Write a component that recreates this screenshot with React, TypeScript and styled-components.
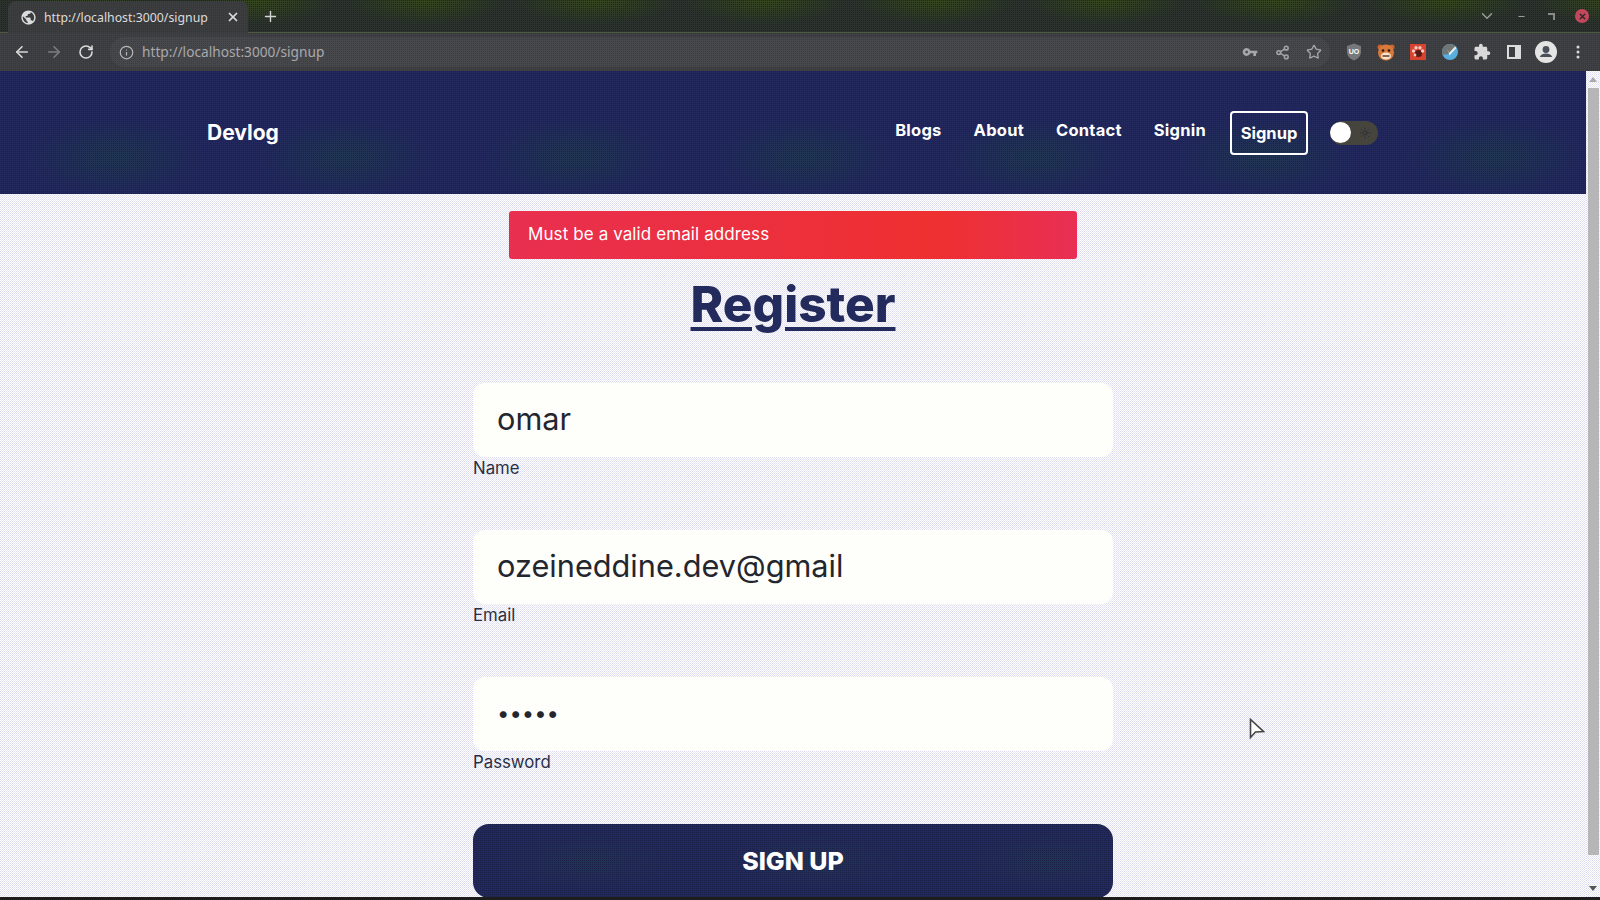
import React from "react";
import styled, { createGlobalStyle } from "styled-components";
import { ArrowLeft, ArrowRight, RotateCw, Info, Share2, Star, Plus, X, ChevronDown, Minus, Sun } from "lucide-react";
import { MdPublic, MdVpnKey, MdExtension } from "react-icons/md";

const FONT = `Inter, "Noto Sans", "Liberation Sans", sans-serif`;

// one pixel of a dither pattern, every 2x2 tile
const dot = (color: string) => `conic-gradient(${color} 25%, transparent 0)`;

const GlobalStyle = createGlobalStyle`
  html, body {
    margin: 0;
    padding: 0;
    height: 100%;
    overflow: hidden;
    background: #1d1d1d;
  }
  #root {
    height: 100%;
  }
`;

const Screen = styled.div`
  position: relative;
  display: flex;
  flex-direction: column;
  width: 1600px;
  height: 900px;
  overflow: hidden;
  font-family: ${FONT};
`;

/* ---------- browser chrome ---------- */

const TabStrip = styled.div`
  display: flex;
  align-items: flex-end;
  height: 33px;
  flex: none;
  padding-left: 8px;
  box-sizing: border-box;
  border-bottom: 1px solid #4d5a42;
  background-color: #2b322d;
  background-image: ${dot("#1f2226")},
    radial-gradient(ellipse 80px 24px at 50% 0, rgba(60, 85, 20, 0.6), transparent);
  background-size: 2px 2px, 170px 33px;
`;

const Tab = styled.div`
  display: flex;
  align-items: center;
  width: 240px;
  height: 32px;
  box-sizing: border-box;
  padding: 0 8px 0 12px;
  margin-bottom: -1px;
  border-radius: 8px 8px 0 0;
  color: #dcdcdc;
  font-size: 12.3px;
  background-color: #3c3d3f;
  background-image: ${dot("#35382f")};
  background-size: 2px 2px;
`;

const TabTitle = styled.span`
  flex: 1;
  margin-left: 7px;
  white-space: nowrap;
  font-family: "Noto Sans", sans-serif;
`;

const NewTab = styled.div`
  display: flex;
  align-items: center;
  justify-content: center;
  width: 28px;
  height: 32px;
  margin-left: 8px;
  color: #d4d4d4;
`;

const WindowControls = styled.div`
  display: flex;
  align-items: center;
  height: 32px;
  margin-left: auto;
  color: #9b9b9b;
`;

const WindowButton = styled.div<{ $width: number }>`
  display: flex;
  align-items: center;
  justify-content: center;
  width: ${(p) => p.$width}px;
`;

const RestoreGlyph = styled.div`
  width: 7px;
  height: 7px;
  border-top: 2px solid #8a8a8a;
  border-right: 2px solid #8a8a8a;
  box-sizing: border-box;
`;

const CloseButton = styled.div`
  display: flex;
  align-items: center;
  justify-content: center;
  width: 14px;
  height: 14px;
  border-radius: 50%;
  background: #c4475c;
  color: #2a2a2a;
`;

const Toolbar = styled.div`
  display: flex;
  align-items: center;
  height: 38px;
  flex: none;
  padding: 0 6px;
  box-sizing: border-box;
  background-color: #3f4043;
  background-image: ${dot("#38392a")};
  background-size: 2px 2px;
`;

const IconSlot = styled.div<{ $color?: string }>`
  display: flex;
  align-items: center;
  justify-content: center;
  width: 32px;
  height: 30px;
  flex: none;
  color: ${(p) => p.$color ?? "#d9d9d9"};
`;

const Omnibox = styled.div`
  display: flex;
  align-items: center;
  flex: 1;
  height: 30px;
  margin: 0 8px;
  border-radius: 15px;
  background: #47484c;
  background-image: ${dot("#3c3d42")};
  background-size: 2px 2px;
`;

const UrlText = styled.span`
  flex: 1;
  padding-bottom: 2px;
  font-family: "Noto Sans", sans-serif;
  font-size: 13.7px;
  color: #a9a9ab;
`;

/* ---------- page ---------- */

const Viewport = styled.div`
  display: flex;
  flex: 1;
  min-height: 0;
`;

const Page = styled.div`
  display: flex;
  flex-direction: column;
  flex: 1;
  min-width: 0;
  overflow: hidden;
`;

const Header = styled.header`
  display: flex;
  align-items: center;
  justify-content: space-between;
  flex: none;
  height: 123px;
  padding: 0 208px 0 207px;
  box-sizing: border-box;
  background-color: #22285c;
  background-image: ${dot("#1b2148")}, radial-gradient(ellipse 90px 40px at 50% 70%, rgba(30, 70, 70, 0.45), transparent);
  background-size: 2px 2px, 230px 123px;
`;

const Logo = styled.div`
  color: #fff;
  font-size: 21px;
  font-weight: 700;
`;

const Nav = styled.nav`
  display: flex;
  align-items: center;
`;

const NavLinks = styled.div`
  display: flex;
  gap: 32px;
  margin-right: 24px;
  margin-bottom: 5px;
`;

const NavLink = styled.a`
  color: #fff;
  font-size: 16.5px;
  font-weight: 700;
  letter-spacing: 0.25px;
`;

const SignupLink = styled.a`
  display: flex;
  align-items: center;
  justify-content: center;
  width: 78px;
  height: 44px;
  box-sizing: border-box;
  border: 2px solid #fff;
  border-radius: 4px;
  color: #fff;
  font-size: 16.5px;
  font-weight: 700;
`;

const ThemeToggle = styled.div`
  display: flex;
  align-items: center;
  justify-content: space-between;
  width: 48px;
  height: 24px;
  margin-left: 22px;
  padding-right: 7px;
  box-sizing: border-box;
  border-radius: 12px;
  background: #45453d;
  color: #2a2d3a;
`;

const ToggleKnob = styled.div`
  width: 21px;
  height: 21px;
  border-radius: 50%;
  background: #fff;
`;

const Main = styled.main`
  display: flex;
  flex-direction: column;
  align-items: center;
  flex: 1;
  padding-top: 17px;
  box-sizing: border-box;
  color: #232a5c;
  background-color: #ffffff;
  background-image: ${dot("#efedb8")}, ${dot("#dcdcee")},
    radial-gradient(ellipse 130px 70px at 50% 50%, rgba(240, 238, 200, 0.06), transparent);
  background-size: 2px 2px, 2px 2px, 240px 190px;
  background-position: 0 0, 1px 1px, 10px 10px;
`;

const Alert = styled.div`
  display: flex;
  align-items: center;
  width: 568px;
  height: 48px;
  flex: none;
  padding-left: 19px;
  padding-bottom: 2px;
  box-sizing: border-box;
  border-radius: 3px;
  background: linear-gradient(90deg, #e92f50 0%, #ee3030 75%, #e92f55 100%);
  color: #fff;
  font-size: 17px;
  letter-spacing: 0.1px;
`;

const Title = styled.h1`
  margin: 14px 0 47px;
  height: 63px;
  line-height: 63px;
  color: #232a5c;
  font-size: 49.5px;
  font-weight: 800;
  text-decoration: underline;
  text-decoration-thickness: 4px;
  text-underline-offset: 5px;
`;

const Form = styled.form`
  display: flex;
  flex-direction: column;
  width: 640px;
`;

const Field = styled.div`
  display: flex;
  flex-direction: column;
  height: 147px;
  flex: none;
`;

const TextInput = styled.input`
  width: 100%;
  height: 74px;
  padding: 0 24px 4px;
  box-sizing: border-box;
  border: none;
  outline: none;
  border-radius: 12px;
  background: #fefefb;
  color: #24262e;
  font-family: ${FONT};
  font-size: 30.7px;

  &[type="password"] {
    font-size: 22px;
    padding-bottom: 2px;
  }
`;

const FieldLabel = styled.label`
  margin-top: 1px;
  color: #2b2f45;
  font-size: 16.8px;
`;

const SubmitButton = styled.button`
  width: 640px;
  height: 74px;
  flex: none;
  border: none;
  border-radius: 16px;
  background-color: #22285c;
  background-image: ${dot("#1b2148")}, radial-gradient(ellipse 90px 30px at 50% 50%, rgba(30, 70, 70, 0.4), transparent);
  background-size: 2px 2px, 230px 74px;
  color: #fff;
  font-family: ${FONT};
  font-size: 25px;
  font-weight: 800;
`;

const Scrollbar = styled.div`
  display: flex;
  flex-direction: column;
  align-items: center;
  justify-content: space-between;
  width: 14px;
  flex: none;
  background-color: #ffffff;
  background-image: ${dot("#efedb8")}, ${dot("#dcdcee")};
  background-size: 2px 2px;
  background-position: 0 0, 1px 1px;
`;

const ScrollArrow = styled.div<{ $down?: boolean }>`
  width: 0;
  height: 0;
  margin: 6px 0;
  border-left: 4px solid transparent;
  border-right: 4px solid transparent;
  ${(p) => (p.$down ? "border-top: 5px solid #555;" : "border-bottom: 5px solid #aaa;")}
`;

const ScrollThumb = styled.div`
  width: 11px;
  flex: 1;
  margin-bottom: 25px;
  background: #b6b6b8;
`;

const BottomEdge = styled.div`
  height: 3px;
  flex: none;
  background: #1d1d1d;
`;

const CursorMark = styled.svg`
  position: absolute;
  left: 1249px;
  top: 718px;
`;

const ShieldIcon = () => (
  <svg width="16" height="18" viewBox="0 0 16 18">
    <path d="M8 0.5 15 3v6c0 4-3 7-7 8.5C4 16 1 13 1 9V3z" fill="#77787a" />
    <text x="8" y="11" textAnchor="middle" fontSize="7" fontWeight="700" fill="#fff" fontFamily="Liberation Sans">UO</text>
  </svg>
);

const TigerIcon = () => (
  <svg width="18" height="18" viewBox="0 0 18 18">
    <circle cx="3" cy="4" r="2.5" fill="#c9652f" />
    <circle cx="15" cy="4" r="2.5" fill="#c9652f" />
    <circle cx="9" cy="9.5" r="8" fill="#d9793a" />
    <ellipse cx="9" cy="13" rx="5" ry="3.6" fill="#f5e6cf" />
    <circle cx="6" cy="7.5" r="1.3" fill="#2a1a10" />
    <circle cx="12" cy="7.5" r="1.3" fill="#2a1a10" />
    <path d="M5.5 13h7" stroke="#5a2a14" strokeWidth="1.4" />
  </svg>
);

const PawIcon = () => (
  <svg width="16" height="16" viewBox="0 0 16 16">
    <rect width="16" height="16" fill="#d8432f" />
    <circle cx="8.5" cy="9.5" r="3.6" fill="#5a1a14" />
    <circle cx="3.5" cy="7" r="1.7" fill="#f4c9c0" />
    <circle cx="6" cy="3.8" r="1.7" fill="#f4c9c0" />
    <circle cx="10" cy="3.8" r="1.7" fill="#f4c9c0" />
    <circle cx="12.6" cy="7" r="1.7" fill="#f4c9c0" />
    <circle cx="5" cy="11" r="1.4" fill="#f4c9c0" />
  </svg>
);

const StylusIcon = () => (
  <svg width="16" height="16" viewBox="0 0 16 16">
    <circle cx="8" cy="8" r="8" fill="#58aede" />
    <path d="M8 0a8 8 0 0 0-8 8c0 1 .2 2 .5 2.8L7 10l7-7A8 8 0 0 0 8 0z" fill="#6f7674" />
    <path d="M5 4 7 9 13 2.5 14.5 4 7.5 11.5z" fill="#e8eef0" />
  </svg>
);

const SidePanelIcon = () => (
  <svg width="14" height="14" viewBox="0 0 14 14">
    <path d="M0 0h14v14H0z M2 2v10h6V2z" fill="#dcdcdc" fillRule="evenodd" />
  </svg>
);

const AvatarIcon = () => (
  <svg width="22" height="22" viewBox="0 0 22 22">
    <circle cx="11" cy="11" r="11" fill="#e4e4e4" />
    <circle cx="11" cy="8.5" r="3.4" fill="#4a5058" />
    <path d="M4.8 16c1-2.6 3.6-3.4 6.2-3.4s5.2.8 6.2 3.4z" fill="#4a5058" />
  </svg>
);

const MenuDots = () => (
  <svg width="4" height="14" viewBox="0 0 4 14">
    <circle cx="2" cy="2" r="1.5" fill="#d9d9d9" />
    <circle cx="2" cy="7" r="1.5" fill="#d9d9d9" />
    <circle cx="2" cy="12" r="1.5" fill="#d9d9d9" />
  </svg>
);

const fields = [
  { label: "Name", type: "text", value: "omar" },
  { label: "Email", type: "text", value: "ozeineddine.dev@gmail" },
  { label: "Password", type: "password", value: "omar1" },
];

const App: React.FC = () => {
  return (
    <Screen>
      <GlobalStyle />
      <TabStrip>
        <Tab>
          <MdPublic size={17} color="#dcdcdc" />
          <TabTitle>http://localhost:3000/signup</TabTitle>
          <X size={14} strokeWidth={3} />
        </Tab>
        <NewTab>
          <Plus size={17} strokeWidth={2} />
        </NewTab>
        <WindowControls>
          <WindowButton $width={34}>
            <ChevronDown size={18} strokeWidth={2} />
          </WindowButton>
          <WindowButton $width={34}>
            <Minus size={9} strokeWidth={3} />
          </WindowButton>
          <WindowButton $width={26}>
            <RestoreGlyph />
          </WindowButton>
          <WindowButton $width={36}>
            <CloseButton>
              <X size={9} strokeWidth={4} />
            </CloseButton>
          </WindowButton>
        </WindowControls>
      </TabStrip>
      <Toolbar>
        <IconSlot><ArrowLeft size={18} strokeWidth={2.2} /></IconSlot>
        <IconSlot $color="#7d7d7d"><ArrowRight size={18} strokeWidth={2.2} /></IconSlot>
        <IconSlot><RotateCw size={16} strokeWidth={2.4} /></IconSlot>
        <Omnibox>
          <IconSlot $color="#b8b8b8"><Info size={15} strokeWidth={2} /></IconSlot>
          <UrlText>http://localhost:3000/signup</UrlText>
          <IconSlot $color="#a4a6aa"><MdVpnKey size={16} /></IconSlot>
          <IconSlot $color="#a4a6aa"><Share2 size={15} strokeWidth={2.4} /></IconSlot>
          <IconSlot $color="#a4a6aa"><Star size={16} /></IconSlot>
        </Omnibox>
        <IconSlot><ShieldIcon /></IconSlot>
        <IconSlot><TigerIcon /></IconSlot>
        <IconSlot><PawIcon /></IconSlot>
        <IconSlot><StylusIcon /></IconSlot>
        <IconSlot><MdExtension size={18} /></IconSlot>
        <IconSlot><SidePanelIcon /></IconSlot>
        <IconSlot><AvatarIcon /></IconSlot>
        <IconSlot><MenuDots /></IconSlot>
      </Toolbar>
      <Viewport>
        <Page>
          <Header>
            <Logo>Devlog</Logo>
            <Nav>
              <NavLinks>
                <NavLink>Blogs</NavLink>
                <NavLink>About</NavLink>
                <NavLink>Contact</NavLink>
                <NavLink>Signin</NavLink>
              </NavLinks>
              <SignupLink>Signup</SignupLink>
              <ThemeToggle>
                <ToggleKnob />
                <Sun size={12} />
              </ThemeToggle>
            </Nav>
          </Header>
          <Main>
            <Alert>Must be a valid email address</Alert>
            <Title>Register</Title>
            <Form>
              {fields.map((field) => (
                <Field key={field.label}>
                  <TextInput type={field.type} defaultValue={field.value} />
                  <FieldLabel>{field.label}</FieldLabel>
                </Field>
              ))}
              <SubmitButton type="button">SIGN UP</SubmitButton>
            </Form>
          </Main>
        </Page>
        <Scrollbar>
          <ScrollArrow />
          <ScrollThumb />
          <ScrollArrow $down />
        </Scrollbar>
      </Viewport>
      <BottomEdge />
      <CursorMark width="16" height="22" viewBox="0 0 16 22">
        <path d="M1.5 1.5v18l5-5.5 8-.5z" fill="#fff" stroke="#444" strokeWidth="1.6" />
      </CursorMark>
    </Screen>
  );
};

export default App;
